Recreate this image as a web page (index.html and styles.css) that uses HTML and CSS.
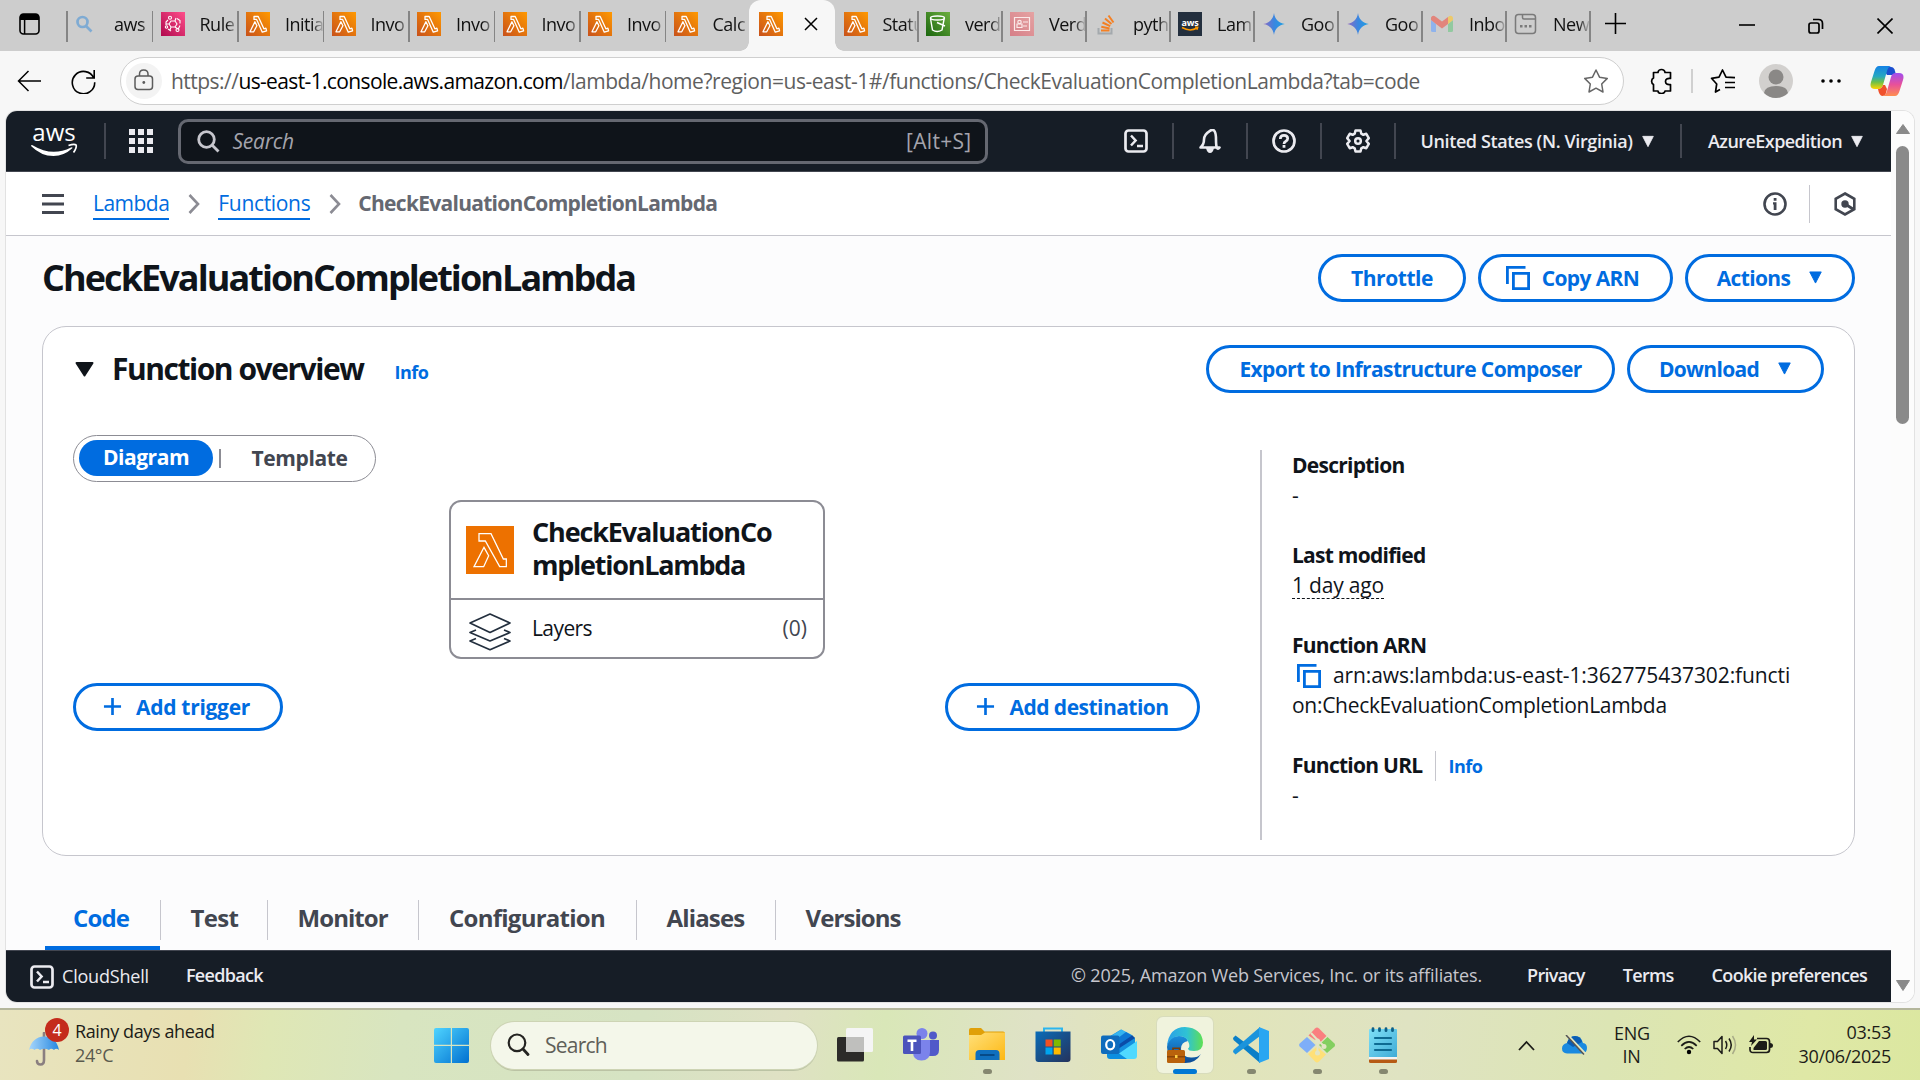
FILE: index.html
```html
<!DOCTYPE html>
<html lang="en">
<head>
<meta charset="utf-8">
<title>CheckEvaluationCompletionLambda</title>
<link rel="stylesheet" href="styles.css">
</head>
<body>
<svg class="defs" width="0" height="0" aria-hidden="true">
  <defs>
    <linearGradient id="g-lambda" x1="0" y1="1" x2="1" y2="0"><stop offset="0" stop-color="#c8511b"/><stop offset="1" stop-color="#ff9900"/></linearGradient>
    <linearGradient id="g-pink" x1="0" y1="1" x2="1" y2="0"><stop offset="0" stop-color="#b0084d"/><stop offset="1" stop-color="#ff4f8b"/></linearGradient>
    <linearGradient id="g-green" x1="0" y1="1" x2="1" y2="0"><stop offset="0" stop-color="#1b660f"/><stop offset="1" stop-color="#6cae3e"/></linearGradient>
    <linearGradient id="g-rose" x1="0" y1="1" x2="1" y2="0"><stop offset="0" stop-color="#d67f88"/><stop offset="1" stop-color="#e5a3a3"/></linearGradient>
    <linearGradient id="g-spark" x1="0" y1="0" x2="1" y2="0"><stop offset="0" stop-color="#9168c0"/><stop offset=".5" stop-color="#3b86e0"/><stop offset="1" stop-color="#1ba1e3"/></linearGradient>
    <linearGradient id="g-win" x1="0" y1="0" x2="1" y2="1"><stop offset="0" stop-color="#4fd4ff"/><stop offset="1" stop-color="#0070d0"/></linearGradient>
    <linearGradient id="g-folder" x1="0" y1="0" x2="1" y2="1"><stop offset="0" stop-color="#ffe07a"/><stop offset="1" stop-color="#fdb813"/></linearGradient>
    <linearGradient id="g-store" x1="0" y1="0" x2="1" y2="1"><stop offset="0" stop-color="#0a6cb8"/><stop offset="1" stop-color="#25335c"/></linearGradient>
    <linearGradient id="g-edge" x1="0" y1="0" x2="1" y2="0"><stop offset="0" stop-color="#2a9fe8"/><stop offset=".55" stop-color="#2fc2d4"/><stop offset="1" stop-color="#5fe052"/></linearGradient>
    <linearGradient id="g-edge2" x1="0" y1="0" x2="0" y2="1"><stop offset="0" stop-color="#1b8fdd"/><stop offset="1" stop-color="#0c4a94"/></linearGradient>
    <linearGradient id="g-pad" x1="0" y1="0" x2="1" y2="1"><stop offset="0" stop-color="#7fe0f7"/><stop offset="1" stop-color="#3fabd6"/></linearGradient>
    <linearGradient id="g-cop1" x1="0" y1="0" x2="0" y2="1"><stop offset="0" stop-color="#1482e6"/><stop offset=".45" stop-color="#26a8c0"/><stop offset=".7" stop-color="#6cc04a"/><stop offset="1" stop-color="#ffd500"/></linearGradient>
    <linearGradient id="g-cop2" x1="0" y1="0" x2="0" y2="1"><stop offset="0" stop-color="#a04df0"/><stop offset=".5" stop-color="#e8509a"/><stop offset="1" stop-color="#ff8f50"/></linearGradient>
    <linearGradient id="g-brella" x1="0" y1="0" x2="1" y2="0"><stop offset="0" stop-color="#a6d6fb"/><stop offset="1" stop-color="#2687e0"/></linearGradient>
  </defs>
  <symbol id="fav-lambda" viewBox="0 0 24 24"><path fill="url(#g-lambda)" d="M0 0h24v24H0z"/><path fill="none" stroke="#fff" stroke-width="1.300" stroke-linejoin="round" d="M8 4.500h4.200l5.700 12.300 2-.6.700 2.700-4.300 1.300L10.600 7.400H8zM8.900 9.800l2 4-3.200 6H4z"/></symbol>
  <symbol id="spark" viewBox="0 0 24 24"><path fill="url(#g-spark)" d="M12 1c.7 6 5 10.300 10.800 11C17 12.700 12.700 17 12 23 11.300 17 7 12.700 1.200 12 7 11.300 11.300 7 12 1z"/></symbol>
  <symbol id="cloudshell" viewBox="0 0 24 24"><rect x="1.500" y="1.500" width="21" height="21" rx="3" fill="none" stroke="currentColor" stroke-width="2.700"/><path fill="none" stroke="currentColor" stroke-width="2.500" d="M7 6.500l4.600 5L7 16.500M13 17h6"/></symbol>
  <symbol id="caret" viewBox="0 0 14 14"><path fill="currentColor" stroke="currentColor" stroke-linejoin="round" d="M.8 1h12.400L7 13z"/></symbol>
  <symbol id="copy" viewBox="0 0 24 24"><path fill="none" stroke="currentColor" stroke-width="2.800" d="M1.400 18V1.400H19.500M7.400 7.400h15.200v15.200H7.400z"/></symbol>
  <symbol id="plus" viewBox="0 0 20 20"><path stroke="currentColor" stroke-width="2.800" d="M10 1v18M1 10h18"/></symbol>
  <symbol id="chev" viewBox="0 0 12 20"><path fill="none" stroke="#8c8c94" stroke-width="2.600" d="M1.500 1l8.500 9-8.500 9"/></symbol>
</svg>

<header class="tabstrip">
  <div class="tab-actions"><svg width="21" height="22" viewBox="0 0 21 22"><rect x="1" y="1" width="19" height="20" rx="3.500" fill="none" stroke="#000" stroke-width="1.600"/><path d="M1 4q0-3 3-3h13q3 0 3 3v3H1z"/><path stroke="#000" stroke-width="1.500" d="M5.600 6v15"/></svg></div>
  <div class="tab w-a"><svg width="24" height="24" viewBox="0 0 24 24"><g fill="none" stroke="#7fabd3" stroke-width="2.700"><circle cx="7.500" cy="10" r="5"/><path d="M11 14l5.500 5.500"/></g></svg><span>aws</span></div>
  <div class="tab w-a"><svg width="24" height="24" viewBox="0 0 24 24"><path fill="url(#g-pink)" d="M0 0h24v24H0z"/><g fill="none" stroke="#fff" stroke-width="1.100"><path d="M10 9h4l2 3-2 3h-4l-2-3zM8 12H5.500M10 15l-1 3M14 9l1-3M14 15l3 2M7 8l-2 2v3M16 6.500l3 2v3M7 17l3 2M19 13.500l-2 4"/><circle cx="9" cy="5.800" r="1.500"/><circle cx="16.500" cy="18" r="1.500"/><circle cx="5.500" cy="15" r="1.200"/></g></svg><span>Rule</span></div>
  <div class="tab w-a"><svg width="24" height="24"><use href="#fav-lambda"/></svg><span>Initia</span></div>
  <div class="tab w-a"><svg width="24" height="24"><use href="#fav-lambda"/></svg><span>Invo</span></div>
  <div class="tab w-a"><svg width="24" height="24"><use href="#fav-lambda"/></svg><span>Invo</span></div>
  <div class="tab w-a"><svg width="24" height="24"><use href="#fav-lambda"/></svg><span>Invo</span></div>
  <div class="tab w-a"><svg width="24" height="24"><use href="#fav-lambda"/></svg><span>Invo</span></div>
  <div class="tab w-b"><svg width="24" height="24"><use href="#fav-lambda"/></svg><span>Calc</span></div>
  <div class="tab active"><svg width="24" height="24"><use href="#fav-lambda"/></svg><svg class="close" width="14" height="14" viewBox="0 0 14 14"><path stroke="#000" stroke-width="1.500" d="M1 1l12 12M13 1L1 13"/></svg></div>
  <div class="tab w-d plain"><svg width="24" height="24"><use href="#fav-lambda"/></svg><span>Statu</span></div>
  <div class="tab w-c"><svg width="24" height="24" viewBox="0 0 24 24"><path fill="url(#g-green)" d="M0 0h24v24H0z"/><g fill="none" stroke="#fff" stroke-width="1.400"><ellipse cx="11.500" cy="6" rx="7" ry="2"/><path d="M4.500 6.500L6.500 18q4.500 3 9.500 0l2.200-11.500M11 10.500l8 3.500"/></g></svg><span>verd</span></div>
  <div class="tab w-c"><svg width="24" height="24" viewBox="0 0 24 24"><path fill="url(#g-rose)" d="M0 0h24v24H0z"/><g fill="none" stroke="#fbe9e9" stroke-width="1.200"><path d="M4.500 5.500h15v13h-15zM13 10h5M13 14h4M7 12h5v3.500H7z"/><circle cx="9.500" cy="10" r="1.700"/></g></svg><span>Verd</span></div>
  <div class="tab w-c"><svg width="24" height="24" viewBox="0 0 24 24"><path fill="none" stroke="#a4a9ad" stroke-width="2" d="M4.500 16v5.500h13V16"/><g stroke="#f48024" stroke-width="2"><path d="M7 18.500h8.500M7.300 14.700l8.300 1.700M8.500 10.500l7.700 3.600M11 6.500l6.500 5.500M14.500 3.500l5 7"/></g></svg><span>pyth</span></div>
  <div class="tab w-c"><svg width="24" height="24" viewBox="0 0 24 24"><path fill="#232f3e" d="M0 0h24v24H0z"/><text x="12" y="13.500" text-anchor="middle" class="aws-mini">aws</text><path fill="none" stroke="#f90" stroke-width="1.500" d="M4 15.500q8 4.500 15 .5M17 15l2.700.300-.8 2.400"/></svg><span>Lam</span></div>
  <div class="tab w-c"><svg width="24" height="24"><use href="#spark"/></svg><span>Goo</span></div>
  <div class="tab w-c"><svg width="24" height="24"><use href="#spark"/></svg><span>Goo</span></div>
  <div class="tab w-c"><svg width="24" height="24" viewBox="0 0 24 24"><path fill="#8fb3ec" d="M1 8l5 4v8H2.500Q1 20 1 18.500z"/><path fill="#92c9a0" d="M23 8l-5 4v8h3.500q1.500 0 1.500-1.500z"/><path fill="#e2857c" d="M1 5.500Q2.500 2.500 6 5l6 4.500L18 5v7l-6 4.500L6 12 1 8z"/><path fill="#ecc96a" d="M18 5q3.500-2.500 5 .5V8l-5 4z"/></svg><span>Inbo</span></div>
  <div class="tab w-c"><svg width="24" height="24" viewBox="0 0 24 24"><g fill="none" stroke="#7a7a7a" stroke-width="1.500"><rect x="1.500" y="2.500" width="20" height="19" rx="3"/><path d="M8.500 2.500v3q0 1.500 1.500 1.500h11.500"/></g><path fill="#7a7a7a" d="M6 13h2.500v2.500H6zM10.500 13H13v2.500h-2.500zM15 13h2.500v2.500H15z"/></svg><span>New</span></div>
  <div class="strip-end">
    <svg width="21" height="21" viewBox="0 0 21 21"><path stroke="#000" stroke-width="1.600" d="M10.500 0v21M0 10.500h21"/></svg>
    <div class="win-controls">
      <svg width="16" height="16" viewBox="0 0 16 16"><path stroke="#000" stroke-width="1.600" d="M0 7h16"/></svg>
      <svg width="16" height="16" viewBox="0 0 16 16"><g fill="none" stroke="#000" stroke-width="1.700"><rect x="1" y="5" width="10" height="10" rx="2"/><path d="M5 1.500h5.500q4 0 4 4V11"/></g></svg>
      <svg width="16" height="16" viewBox="0 0 16 16"><path stroke="#000" stroke-width="1.600" d="M.5.5l15 15M15.500.5l-15 15"/></svg>
    </div>
  </div>
</header>

<div class="toolbar">
  <svg class="back" width="24" height="22" viewBox="0 0 24 22"><path fill="none" stroke="#000" stroke-width="1.500" d="M24 11H1.500M11.500 1l-10 10 10 10"/></svg>
  <svg class="reload" width="25" height="25" viewBox="0 0 25 25"><path fill="none" stroke="#000" stroke-width="1.600" d="M22.800 9.200a11.200 11.200 0 1 0 .9 4M23.200 1v8h-8"/></svg>
  <div class="omnibox">
    <div class="lock"><svg width="20" height="22" viewBox="0 0 20 22"><g fill="none" stroke="#5c5c5c" stroke-width="1.500"><rect x="1" y="7" width="17.500" height="13.500" rx="3"/><path d="M5.500 7V5q0-4 4.200-4T14 5v2"/></g><circle cx="9.800" cy="13.500" r="1.400" fill="#5c5c5c"/></svg></div>
    <div class="url"><span class="u1">https://</span><span class="u2">us-east-1.console.aws.amazon.com</span><span class="u3">/lambda/home?region=us-east-1#/functions/CheckEvaluationCompletionLambda?tab=code</span></div>
    <svg width="26" height="26" viewBox="0 0 26 26"><path fill="none" stroke="#666" stroke-width="1.500" stroke-linejoin="round" d="M13 2l3.500 7.200 7.800 1.200-5.600 5.600 1.300 8-7-3.800L6 24l1.300-8-5.600-5.600 7.800-1.200z"/></svg>
  </div>
  <div class="tools">
    <svg class="puzzle" width="24" height="26" viewBox="0 0 24 26"><path fill="none" stroke="#000" stroke-width="1.700" stroke-linejoin="round" d="M8 4.500a3.500 3 0 0 1 7 0h5.500v6q-5-.5-5 3t5 3v6.500H15a3.500 2.500 0 0 1-7 0H3.500v-6.500a3 3.500 0 0 1 0-6.500V4.500z"/></svg>
    <i></i>
    <svg class="favs" width="26" height="26" viewBox="0 0 26 26"><path fill="none" stroke="#000" stroke-width="1.700" stroke-linejoin="round" d="M10 21.500L5.500 24l1.200-8L1.500 10.300 9 9.200 12.500 2 16 9.200l9 .4M15 14.500h10M15 19.500h10"/></svg>
    <svg class="avatar" width="34" height="34" viewBox="0 0 34 34"><circle cx="17" cy="17" r="17" fill="#d2d0ce"/><circle cx="17" cy="13" r="7.500" fill="#8a8886"/><path fill="#8a8886" d="M5 29q1-7 12-7t12 7q-5 5-12 5T5 29z"/></svg>
    <svg class="dots" width="22" height="6" viewBox="0 0 22 6"><circle cx="3" cy="3" r="1.800"/><circle cx="11" cy="3" r="1.800"/><circle cx="19" cy="3" r="1.800"/></svg>
    <svg width="34" height="31" viewBox="0 0 34 31"><path fill="#1b4fd0" d="M12 1h9q3 0 4 4l1 4h-9z"/><path fill="url(#g-cop1)" d="M9 0h12q-3 1-4 5l-4 14q-1 4-5 4H5q-6 0-4-7L4.500 5Q6 0 9 0z"/><path fill="url(#g-cop2)" d="M25 30H13q3-1 4-5l4-14q1-4 5-4h3q6 0 4 7l-3.500 11q-1.500 5-4.500 5z"/><path fill="#f0512c" d="M8 23q4 0 5-4l2 0 2 4-1 4q-1 3-4 3-3-1-4-7z"/></svg>
  </div>
</div>

<div class="viewport">
  <div class="page">
    <nav class="aws-nav">
      <svg class="aws-logo" width="47" height="31" viewBox="0 0 47 31"><text x="23" y="15" text-anchor="middle" class="aws-word">aws</text><path fill="#fff" d="M0 19.500q1-.8 2 0Q21 31 40 21.500q2-.5 1.300.8Q33 30 22.500 30 10 30 0 20z"/><path fill="none" stroke="#fff" stroke-width="1.700" d="M37.500 19.500q6-2 7.700-.4.600 2.800-2.700 7.400"/></svg>
      <i class="v"></i>
      <svg class="apps" width="24" height="24" viewBox="0 0 24 24" fill="#ebebf0"><path d="M0 0h6v6H0zM9 0h6v6H9zM18 0h6v6h-6zM0 9h6v6H0zM9 9h6v6H9zM18 9h6v6h-6zM0 18h6v6H0zM9 18h6v6H9zM18 18h6v6h-6z"/></svg>
      <div class="aws-search"><svg width="23" height="23" viewBox="0 0 23 23"><g fill="none" stroke="#c6c6cd" stroke-width="2.800"><circle cx="9.500" cy="9.500" r="7.800"/><path d="M15 15l6.500 6.500"/></g></svg><em>Search</em><span>[Alt+S]</span></div>
      <div class="nav-icons">
        <div><svg width="24" height="24"><use href="#cloudshell"/></svg></div>
        <div><svg width="24" height="24" viewBox="0 0 24 24"><path fill="none" stroke="currentColor" stroke-width="2.600" stroke-linejoin="round" d="M2.500 18.500q3.500-3 3.500-8T12 1.800t6 8.700 3.500 8z"/><path fill="currentColor" d="M8 19h8q-1 5-4 5t-4-5z"/></svg></div>
        <div><svg width="24" height="24" viewBox="0 0 24 24"><g fill="none" stroke="currentColor" stroke-width="2.700"><circle cx="12" cy="12" r="10.500"/><path d="M8.300 10q0-3.600 3.700-3.600t3.700 3.200q0 1.700-1.900 2.700T12 15"/></g><path fill="currentColor" d="M10.600 16h2.800v2.700h-2.800z"/></svg></div>
        <div><svg width="24" height="24" viewBox="0 0 24 24"><g fill="none" stroke="currentColor" stroke-width="2.500" stroke-linejoin="round"><path d="M9.500 1.500h5l.8 3.200 2 1.100 3-1 2.500 4.300-2.400 2.900 2.400 2.900-2.500 4.300-3-1-2 1.100-.8 3.200h-5l-.8-3.200-2-1.100-3 1L1.200 14.900 3.600 12 1.200 9.100l2.500-4.300 3 1 2-1.100z"/><circle cx="12" cy="12" r="2.800"/></g></svg></div>
      </div>
      <div class="region"><span>United States (N. Virginia)</span><svg width="12" height="13"><use href="#caret"/></svg></div>
      <div class="account"><span>AzureExpedition</span><svg width="12" height="13"><use href="#caret"/></svg></div>
    </nav>

    <div class="crumbs">
      <svg class="burger" width="22" height="20" viewBox="0 0 22 20"><path stroke="#424650" stroke-width="2.800" d="M0 1.500h22M0 10h22M0 18.500h22"/></svg>
      <a class="c1">Lambda</a>
      <svg width="12" height="20"><use href="#chev"/></svg>
      <a class="c2">Functions</a>
      <svg width="12" height="20"><use href="#chev"/></svg>
      <b>CheckEvaluationCompletionLambda</b>
      <div class="crumb-tools">
        <svg width="24" height="24" viewBox="0 0 24 24"><circle cx="12" cy="12" r="10.500" fill="none" stroke="#424650" stroke-width="2.600"/><path fill="#424650" d="M10.700 6h2.800v2.800h-2.800zM10 10.200h3.500V18h-2.800v-5.500H10z"/></svg>
        <i></i>
        <svg width="24" height="24" viewBox="0 0 24 24"><path fill="none" stroke="#424650" stroke-width="2.600" d="M12 1.500l9.300 5.300v10.400L12 22.500l-9.300-5.300V6.800z"/><circle cx="12" cy="12" r="3.700" fill="#424650"/><path stroke="#424650" stroke-width="2.800" d="M12 12l8 5"/></svg>
      </div>
    </div>

    <main>
      <div class="title-row">
        <h1>CheckEvaluationCompletionLambda</h1>
        <div class="btns">
          <button class="w148">Throttle</button>
          <button class="w195"><svg width="24" height="24"><use href="#copy"/></svg><span>Copy ARN</span></button>
          <button class="w170"><span>Actions</span><svg width="15" height="13" class="ml"><use href="#caret"/></svg></button>
        </div>
      </div>

      <section class="card">
        <div class="card-head">
          <svg width="19" height="15" viewBox="0 0 19 15"><path fill="#0f141a" stroke="#0f141a" stroke-linejoin="round" stroke-width="2" d="M1.500 1h16L9.500 13.500z"/></svg>
          <h2>Function overview</h2><a class="info">Info</a>
          <div class="btns">
            <button class="w409">Export to Infrastructure Composer</button>
            <button class="w197"><span>Download</span><svg width="15" height="13" class="ml"><use href="#caret"/></svg></button>
          </div>
        </div>
        <div class="card-body">
          <div class="design">
            <div class="segmented"><span class="on">Diagram</span><i></i><span class="off">Template</span></div>
            <div class="node">
              <div class="node-head">
                <svg width="48" height="48" viewBox="0 0 144 144"><path fill="#ed7100" d="M0 0h144v144H0z"/><path fill="none" stroke="#fff" stroke-width="3.800" d="M39 23h36l37 76h9v23h-20L58 45H39zM54 64l14 25-15 33H24z"/></svg>
                <h3><span>CheckEvaluationCo</span><br><span class="l2">mpletionLambda</span></h3>
              </div>
              <div class="node-foot">
                <svg width="42" height="38" viewBox="0 0 42 38"><g fill="none" stroke="#232f3e" stroke-width="1.700" stroke-linejoin="round"><path d="M21 1l20 9-20 9.500L1 10zM7 17l-6 2.500 20 8.500 20-8.500-6-2.500M7 25.500L1 28l20 8.700L41 28l-6-2.500"/></g></svg>
                <span class="ly">Layers</span><span class="ct">(0)</span>
              </div>
            </div>
            <div class="add-row">
              <button class="w210"><svg width="19" height="19"><use href="#plus"/></svg><span>Add trigger</span></button>
              <button class="w255"><svg width="19" height="19"><use href="#plus"/></svg><span>Add destination</span></button>
            </div>
          </div>
          <dl class="details">
            <dt>Description</dt><dd>-</dd>
            <dt>Last modified</dt><dd><span class="ago">1 day ago</span></dd>
            <dt>Function ARN</dt><dd class="arn"><svg width="24" height="24"><use href="#copy"/></svg><span class="a1">arn:aws:lambda:us-east-1:362775437302:functi</span><br><span class="a2">on:CheckEvaluationCompletionLambda</span></dd>
            <dt>Function URL<a class="info">Info</a></dt><dd>-</dd>
          </dl>
        </div>
      </section>

      <div class="tabs"><span class="t-code">Code</span><span>Test</span><span>Monitor</span><span>Configuration</span><span>Aliases</span><span>Versions</span></div>
    </main>

    <footer class="aws-foot">
      <svg width="24" height="24"><use href="#cloudshell"/></svg><span class="f1">CloudShell</span><span class="f2">Feedback</span>
      <div class="legal"><span class="copyr">© 2025, Amazon Web Services, Inc. or its affiliates.</span><span>Privacy</span><span>Terms</span><span>Cookie preferences</span></div>
    </footer>
  </div>
  <div class="scroll">
    <svg width="14" height="10" viewBox="0 0 14 10"><path fill="#8a8a8a" stroke="#8a8a8a" stroke-linejoin="round" d="M7 .5l6.500 9H.5z"/></svg>
    <div class="thumb"></div>
    <svg class="down" width="14" height="11" viewBox="0 0 14 11"><path fill="#8a8a8a" stroke="#8a8a8a" stroke-linejoin="round" d="M7 10.500L.5.500h13z"/></svg>
  </div>
</div>

<div class="taskbar">
  <div class="weather">
    <div class="brella"><svg width="31" height="34" viewBox="0 0 31 34"><path fill="none" stroke="#8a7f80" stroke-width="2.600" stroke-linecap="round" d="M15 1v27q0 4.500-3.500 4.500T8 29"/><path fill="url(#g-brella)" d="M0 18Q3 5 15 4.500T30 18q-3-2.500-5 0-3-2.500-5 0-5-2.500-9 0-3-2.500-5.500 0-3-2.500-5.500 0z"/></svg><b>4</b></div>
    <div class="wtext"><span>Rainy days ahead</span><span class="deg">24°C</span></div>
  </div>
  <svg class="start" width="35" height="35" viewBox="0 0 35 35"><path fill="url(#g-win)" d="M2 0h14.800v16.800H0V2q0-2 2-2zM18 0h15q2 0 2 2v14.800H18zM0 18h16.800v17H2q-2 0-2-2zM18 18h17v15q0 2-2 2H18z"/></svg>
  <div class="tb-search"><svg width="23" height="23" viewBox="0 0 23 23"><g fill="none" stroke="#242421" stroke-width="2.200"><circle cx="10" cy="9.800" r="8.300"/><path stroke-width="2.800" stroke-linecap="round" d="M16 16l5 5.500"/></g></svg><span>Search</span></div>
  <div class="apps-row">
    <div><svg width="36" height="36" viewBox="0 0 36 36"><rect y="10" width="27" height="24.500" rx="1.500" fill="#2c2b29"/><rect x="9" y="1" width="27" height="24" rx="1.500" fill="#f5f5f5"/><path fill="#bfbfbd" d="M9 10h18v15H9z"/></svg></div>
    <div><svg width="36" height="36" viewBox="0 0 36 36"><circle cx="19" cy="6.500" r="5.500" fill="#7b83eb"/><circle cx="30" cy="8.500" r="4" fill="#5059c9"/><path fill="#5059c9" d="M24 13h12v10q0 6-6 6h-6z"/><path fill="#7b83eb" d="M10 13h17v12q0 8.500-8.500 8.500T10 25z"/><rect y="8.500" width="18" height="18.500" rx="1.500" fill="#4b53bc"/><path fill="#fff" d="M4.500 12.500h9V15H10.300v9H7.700v-9H4.500z"/></svg></div>
    <div class="run"><svg width="36" height="36" viewBox="0 0 36 36"><path fill="#e0a008" d="M0 3q0-2 2-2h10l3.500 3.500H34q2 0 2 2V15H0z"/><path fill="url(#g-folder)" d="M0 8h12l4-2.500h20V33H0z"/><path fill="#0f6fbe" d="M6.500 33v-6q0-4 4-4H27q3.500 0 3.500 4v6z"/><path fill="#064a88" d="M11 27h14.500v2H11z"/></svg></div>
    <div><svg width="36" height="36" viewBox="0 0 36 36"><path fill="none" stroke="#2cb5ee" stroke-width="2" d="M9 9V1.500h18V9"/><path fill="url(#g-store)" d="M.5 4.500h35V32q0 3-3 3h-29q-3 0-3-3z"/><path fill="#f25022" d="M10.500 12.500h7v7h-7z"/><path fill="#7fba00" d="M18.700 12.500h7v7h-7z"/><path fill="#00a4ef" d="M10.500 20.500h7v7h-7z"/><path fill="#ffb900" d="M18.700 20.500h7v7h-7z"/></svg></div>
    <div><svg width="36" height="36" viewBox="0 0 36 36"><path fill="#1490df" d="M6 11L20 2.500 34 11v16H6z"/><path fill="#34b4f0" d="M10 9l10.500-6.500L31 8l-15 10z"/><path fill="#0a4ca8" d="M31 8l3 3-17 11v-6z"/><path fill="#0f78d4" d="M25 5l6 3.500L17 18v-7z"/><path fill="#50d9ff" d="M36 14v15q0 3-3 3H10z"/><path fill="#0c8ee0" d="M6 18l20 14H9q-3 0-3-3z"/><rect y="8.500" width="18.500" height="18.500" rx="2" fill="#0f6cbd"/><ellipse cx="9.200" cy="17.700" rx="4" ry="4.700" fill="none" stroke="#fff" stroke-width="2.200"/></svg></div>
    <div class="run current"><svg width="36" height="36" viewBox="0 0 36 36"><path fill="url(#g-edge2)" d="M0 20Q1 9 12 9q7 0 9 5-7 1-7 8 1 9 11 8.500 6 0 9-3.500Q29 36 18 36 1 35 0 20z"/><path fill="url(#g-edge)" d="M0 19Q2 0 18 0q17 1 18 15.500 0 8.500-9 8.500-6 0-6-2.500 2-1 1-5Q20 9 12 9 3 10 0 19z"/><rect y="23" width="18" height="13" rx="1.500" fill="#b9620c"/><path fill="none" stroke="#7a3c05" stroke-width="1.600" d="M6 23v-1.800h6.500V23"/><path fill="#8a4507" d="M0 29h18v1.500H0z"/><path fill="#ffcf45" d="M8 28h2.500v3H8z"/></svg></div>
    <div class="run"><svg width="36" height="36" viewBox="0 0 36 36"><path fill="#0a7fc8" d="M0 11l2.500-2.500L27 27v9L.5 13z"/><path fill="#1b94dc" d="M0 25l2.500 2.500L27 9V0L.5 23z"/><path fill="#2aa6f2" d="M26 0l10 4v28l-10 4z"/></svg></div>
    <div class="run"><svg width="36" height="36" viewBox="0 0 36 36"><path fill="#fa7f7f" d="M9.500 8.500L16 1.500q2-2 4 0l7.500 7.500-7 7z"/><path fill="#84cf60" d="M28.500 10l7 6.500q1 1.500 0 3L28 26l-8-8z"/><path fill="#ffe078" d="M18 19.500l9 8-7 7q-2 1.800-4 0l-7-7.500z"/><path fill="#7eaef8" d="M8 10l8.500 8L8 26 .7 19.500q-1.200-1.500 0-3z"/><path fill="none" stroke="#e3e5c4" stroke-width="2" d="M12 6l6.500 7v13M18.500 13l6.500 6"/><g fill="#e3e5c4"><circle cx="18.500" cy="14" r="2.500"/><circle cx="18.500" cy="26" r="2.500"/><circle cx="25" cy="19.500" r="2.500"/></g></svg></div>
    <div class="run"><svg width="36" height="36" viewBox="0 0 36 36"><path fill="#b65a14" d="M4 30h28v4.500q0 1.500-1.500 1.500h-25Q4 36 4 34.500z"/><path fill="#f3f3f3" d="M4 29h28v3.500H4z"/><path fill="url(#g-pad)" d="M5 2h26q1 0 1 1v27H4V3q0-1 1-1z"/><path stroke="#0d6a92" stroke-width="2.200" stroke-linecap="round" d="M10 11h16M10 17h16M10 23h16"/><path stroke="#0d5f86" stroke-width="2.800" stroke-linecap="round" d="M8 1.700v2M14.500 1.700v2M21 1.700v2M27.500 1.700v2"/></svg></div>
  </div>
  <div class="tray">
    <svg class="up" width="17" height="11" viewBox="0 0 17 11"><path fill="none" stroke="#1c1c18" stroke-width="1.800" d="M1 10l7.500-8L16 10"/></svg>
    <svg class="od" width="25" height="20" viewBox="0 0 25 20"><path fill="#1a8ae0" d="M5 18.500q-5-.5-5-5T5 8q2-7 8-7t8 7q4 .5 4 5t-4.500 5.500z"/><path fill="#0a5db4" d="M5 8q2-7 8-7t7 6l-9 5z"/><path stroke="#e5e7c0" stroke-width="2.400" d="M5.500 0l18 19"/><path stroke="#555" stroke-width="1.500" d="M4 0l18 19.500"/></svg>
    <div class="lang"><span>ENG</span><span>IN</span></div>
    <div class="status">
      <svg width="24" height="20" viewBox="0 0 24 20"><g fill="none" stroke="#1c1c18" stroke-width="1.700"><path d="M.8 7Q12-4.500 23.200 7M4.300 10.800Q12 3 19.700 10.800M7.700 14Q12 10 16.300 14"/></g><circle cx="12" cy="17" r="2.200"/></svg>
      <svg width="24" height="20" viewBox="0 0 24 20"><g fill="none" stroke="#1c1c18" stroke-width="1.500" stroke-linejoin="round"><path d="M1 6.500h3.500L9 1.500v17l-4.500-5H1zM12.500 6q2.500 4 0 8M16 3.500q4.500 6.500 0 13"/><path stroke="#a9ac88" d="M19.500 1q6 9 0 18"/></g></svg>
      <svg width="24" height="20" viewBox="0 0 24 20"><path fill="none" stroke="#1c1c18" stroke-width="1.700" d="M8 3.500h9.500q3 0 3 3v8q0 3-3 3H4q-3 0-3-3V12"/><path fill="#1c1c18" d="M10 6h6.500q1.500 0 1.500 1.500v6q0 1.500-1.500 1.500H4.500V13zM21 8q3 0 3 2.500T21 13zM5 0L0 7h3l-1 4 6-6.500H5z"/></svg>
    </div>
    <div class="clock"><span class="tm">03:53</span><span class="dt">30/06/2025</span></div>
  </div>
</div>
</body>
</html>
```
FILE: styles.css
```css
* { box-sizing: border-box; }
body {
  margin: 0;
  width: 1920px;
  height: 1080px;
  overflow: hidden;
  display: flex;
  flex-direction: column;
  background: #f7f7f7;
  color: #0f141a;
  font-family: "Open Sans", "Noto Sans", sans-serif;
  font-size: 21px;
}
svg { display: block; flex: none; }
.defs { position: absolute; }

/* browser tab strip */
.tabstrip { height: 51px; flex: none; background: #cdcdcd; display: flex; align-items: stretch; }
.tab-actions { width: 66px; padding: 13px 0 0 19px; flex: none; }
.tab { display: flex; align-items: center; padding: 0 0 3px 9px; position: relative; flex: none; font-size: 18px; letter-spacing: -0.5px; color: #111; }
.tab span {
  margin-left: 15px;
  flex: 1;
  overflow: hidden;
  white-space: nowrap;
  -webkit-mask-image: linear-gradient(90deg, #000 70%, transparent 105%);
  mask-image: linear-gradient(90deg, #000 70%, transparent 105%);
}
.tab::before { content: ""; position: absolute; left: 0; top: 11px; width: 1.5px; height: 31px; background: #858585; }
.tab.active::before, .tab.plain::before { display: none; }
.w-a { width: 85.5px; }
.w-b { width: 84.5px; }
.w-c { width: 84px; }
.w-d { width: 82.5px; }
.tab.active { width: 85.5px; background: #f7f7f7; border-radius: 12px 12px 0 0; padding-left: 10px; }
.tab.active::after {
  content: "";
  position: absolute;
  left: -9px;
  right: -9px;
  bottom: 0;
  height: 9px;
  background:
    radial-gradient(circle at 0 0, transparent 8.5px, #f7f7f7 9px) left / 9px 9px no-repeat,
    radial-gradient(circle at 100% 0, transparent 8.5px, #f7f7f7 9px) right / 9px 9px no-repeat;
}
.close { margin-left: 21px; }
.aws-mini { font: 700 9px "Open Sans", sans-serif; fill: #fff; letter-spacing: -0.2px; }
.strip-end { flex: 1; display: flex; align-items: flex-start; padding: 13px 27px 0 16px; position: relative; }
.strip-end::before { content: ""; position: absolute; left: 0; top: 11px; width: 1.5px; height: 31px; background: #858585; }
.win-controls { display: flex; gap: 53px; margin: 5px 0 0 auto; }

/* browser toolbar */
.toolbar { height: 60px; flex: none; display: flex; align-items: center; background: #f7f7f7; padding-left: 17px; }
.back { margin-top: -1px; }
.reload { margin-left: 30px; }
.omnibox { margin-left: 24px; margin-top: -1px; width: 1504px; height: 48px; border: 1.5px solid #cfcfcf; border-radius: 24px; background: #fff; display: flex; align-items: center; padding: 0 14px 0 5px; }
.lock { width: 36px; height: 36px; border-radius: 50%; background: #f3f3f3; display: flex; align-items: center; justify-content: center; }
.lock svg { margin-top: -1px; }
.url { margin-left: 9px; white-space: nowrap; flex: 1; color: #5f5f5f; }
.u1 { letter-spacing: -0.53px; }
.u2 { letter-spacing: -0.64px; color: #000; }
.u3 { letter-spacing: -0.45px; }
.tools { display: flex; align-items: center; }
.tools i { width: 2px; height: 24px; background: #d0d0d0; margin: 0 17px 0 17px; }
.puzzle { margin-left: 26px; }
.avatar { margin-left: 23px; }
.dots { margin: 0 28px 0 27px; }

/* page viewport */
.viewport { height: 891px; flex: none; margin: 0 6px; display: flex; border-radius: 11px; overflow: hidden; background: #fcfcfd; box-shadow: 0 0 0 1px #e2e2e2; }
.page { width: 1885px; display: flex; flex-direction: column; }
.scroll { width: 23px; display: flex; flex-direction: column; align-items: center; padding: 13px 0 11px; background: #fcfcfc; }
.thumb { width: 13px; height: 278px; margin-top: 12px; border-radius: 7px; background: #8a8a8a; }
.down { margin-top: auto; }

.aws-nav { height: 61px; flex: none; background: #161d26; border-bottom: 1px solid #424650; display: flex; align-items: center; color: #ebebf0; padding-left: 25px; font-size: 18px; white-space: nowrap; }
.aws-word { font: 500 24px "Open Sans", sans-serif; fill: #fff; letter-spacing: 0; }
.aws-nav .v { width: 1.5px; height: 36px; background: #424650; margin-left: 26px; }
.apps { margin-left: 23px; }
.aws-search { margin-left: 25px; width: 810px; height: 45px; border: 3px solid #656871; border-radius: 10px; background: #0f141a; display: flex; align-items: center; padding: 0 13px 0 16px; font-size: 21px; color: #a4a4ad; }
.aws-search em { margin: -1px 0 0 13px; letter-spacing: -0.25px; }
.aws-search span { margin: -1px 0 0 auto; letter-spacing: 0.3px; }
.nav-icons { display: flex; margin-left: 112px; }
.nav-icons div { width: 74px; height: 36px; display: flex; align-items: center; justify-content: center; border-right: 2px solid #424650; }
.region { display: flex; align-items: center; height: 34px; width: 286.5px; padding-left: 25px; border-right: 2px solid #424650; font-weight: 600; letter-spacing: -0.39px; }
.region span, .account span { margin-top: -1px; }
.region svg { margin-left: 9px; }
.account { display: flex; align-items: center; padding-left: 26px; font-weight: 600; letter-spacing: -0.56px; }
.account svg { margin-left: 9px; }

.crumbs { height: 64px; flex: none; background: #fff; border-bottom: 1.5px solid #c6c6cd; display: flex; align-items: center; padding-left: 36px; white-space: nowrap; }
.crumbs a { color: #006ce0; border-bottom: 2px solid #006ce0; line-height: 29px; }
.c1 { letter-spacing: -0.52px; margin: 1px 19px 0 29px; }
.c2 { letter-spacing: -0.33px; margin: 1px 19px 0 18px; }
.crumbs b { font-weight: 700; color: #656871; letter-spacing: -0.71px; margin: -1px 0 0 17px; }
.crumb-tools { margin-left: auto; display: flex; align-items: center; padding-right: 34px; }
.crumb-tools i { width: 1.5px; height: 38px; background: #c6c6cd; margin: 0 23px 0 22px; }

/* main content */
main { flex: 1; background: #fcfcfd; padding: 18px 36px 0; display: flex; flex-direction: column; }
.title-row { display: flex; height: 48px; align-items: center; justify-content: space-between; }
h1, h2, h3 { margin: 0; font-weight: 700; }
h1 { font-size: 36px; letter-spacing: -1.93px; line-height: 48px; }
.btns { display: flex; gap: 12px; margin-left: auto; }
button {
  height: 48px;
  border: 3px solid #006ce0;
  border-radius: 24px;
  background: #fff;
  color: #006ce0;
  font: 700 21px "Open Sans", "Noto Sans", sans-serif;
  letter-spacing: -0.62px;
  padding: 0 0 1px;
  display: flex;
  align-items: center;
  justify-content: center;
  white-space: nowrap;
}
button svg + span { margin-left: 12px; }
.ml { margin-left: 18px; }
.w148 { width: 148px; letter-spacing: -0.44px; }
.w170 { width: 170px; }
.w195 { width: 195px; padding-right: 6px; }
.w197 { width: 197px; letter-spacing: -0.7px; }
.w409 { width: 409px; }
.w210 { width: 210px; padding-right: 3px; letter-spacing: -0.3px; }
.w255 { width: 255px; letter-spacing: -0.53px; }

.card { margin-top: 24px; height: 530px; width: 1813px; flex: none; border: 1.5px solid #c6c6cd; border-radius: 24px; background: #fff; padding: 18px 30px 0; }
.card-head { display: flex; align-items: center; height: 48px; padding-left: 2px; }
h2 { font-size: 30px; letter-spacing: -1.46px; margin: -2px 0 0 18px; }
.info { color: #006ce0; font-size: 18px; font-weight: 700; letter-spacing: -0.45px; }
.card-head .info { margin: 5px 0 0 31px; }
.card-body { display: flex; margin-top: 42px; }
.design { width: 1187px; flex: none; }
.segmented { width: 303px; height: 47px; border: 1.5px solid #8c8c94; border-radius: 24px; display: flex; align-items: center; padding: 0 5px 1px; font-weight: 700; letter-spacing: -0.45px; }
.on { width: 134px; height: 36px; border-radius: 18px; background: #006ce0; color: #fff; text-align: center; line-height: 35px; }
.segmented i { width: 1.5px; height: 19px; background: #8c8c94; margin-left: 6px; }
.off { color: #424650; margin-left: 31px; line-height: 35px; letter-spacing: -0.39px; }
.node { width: 376px; height: 159px; margin: 18px 0 0 376px; border: 2px solid #8c8c94; border-radius: 12px; }
.node-head { height: 98px; border-bottom: 2px solid #8c8c94; display: flex; align-items: center; padding-left: 15px; }
h3 { font-size: 27px; line-height: 33px; letter-spacing: -1.14px; margin: -4px 0 0 18px; }
.l2 { letter-spacing: -1.26px; }
.node-foot { display: flex; align-items: center; height: 58px; padding: 0 16px 0 18px; }
.node-foot svg { margin-top: 5px; }
.ly { margin: -2px 0 0 21px; letter-spacing: -0.59px; }
.ct { margin: -2px 0 0 auto; color: #424650; }
.add-row { margin-top: 24px; width: 1127px; display: flex; justify-content: space-between; }
.add-row button svg + span { margin-left: 14px; }
.details { margin: 15px 0 0; height: 390px; border-left: 2px solid #c6c6cd; padding-left: 30px; line-height: 30px; letter-spacing: -0.1px; white-space: nowrap; }
dt { font-weight: 700; letter-spacing: -0.74px; height: 30px; }
dd { margin: 0 0 30px; min-height: 30px; }
.ago { display: inline-block; height: 29px; border-bottom: 1.5px dashed #0f141a; letter-spacing: -0.2px; line-height: 30px; }
.arn svg { display: inline-block; vertical-align: -5px; margin: -3px 12px 0 5px; color: #006ce0; }
.a2 { letter-spacing: -0.3px; }
.details .info { display: inline-block; border-left: 1.5px solid #c6c6cd; padding-left: 12px; margin-left: 13px; }

.tabs { display: flex; margin: 44px 0 0 3px; height: 50px; font-size: 24px; font-weight: 700; color: #424650; letter-spacing: -0.93px; white-space: nowrap; }
.tabs span { flex: none; height: 40px; line-height: 35px; padding-left: 30px; border-left: 1.5px solid #c6c6cd; }
.tabs .t-code { width: 114.5px; height: 50px; border-left: 0; padding-left: 28px; color: #006ce0; border-bottom: 4px solid #006ce0; letter-spacing: -0.86px; }
.tabs span:nth-child(2) { width: 107px; letter-spacing: -0.7px; }
.tabs span:nth-child(3) { width: 151.5px; }
.tabs span:nth-child(4) { width: 217.5px; letter-spacing: -0.74px; }
.tabs span:nth-child(5) { width: 139px; letter-spacing: -0.85px; }

.aws-foot { height: 52px; flex: none; background: #161d26; border-top: 1.5px solid #424650; color: #ebebf0; display: flex; align-items: center; padding: 0 24px; font-size: 18px; white-space: nowrap; }
.f1 { margin: -1px 0 0 8px; letter-spacing: -0.2px; font-weight: 500; }
.f2 { margin: -3px 0 0 37px; letter-spacing: -0.68px; font-weight: 600; }
.legal { margin: -3px 0 0 auto; display: flex; gap: 38px; font-weight: 600; letter-spacing: -0.68px; }
.copyr { font-weight: 400; color: #c6c6cd; letter-spacing: -0.17px; margin-right: 7px; }

/* Windows taskbar */
.taskbar {
  margin-top: auto;
  height: 72px;
  flex: none;
  border-top: 2px solid #b4b69c;
  background: linear-gradient(97deg, #e8e4bf 0, #e8e0b2 190px, #dfe7b5 270px, #d8e5c0 400px, #d6e3c3 640px, #dfe1c4 780px, #d9e7b8 880px, #dfe2c6 1030px, #e2e5b8 1160px, #dfe3c2 1400px, #dce5b4 1600px, #dfe8a6 1800px, #dbe7a0 1920px);
  display: flex;
  align-items: center;
  color: #1c1c18;
  font-size: 18px;
  white-space: nowrap;
}
.weather { width: 434px; display: flex; padding-left: 29px; }
.brella { width: 46px; height: 46px; padding-top: 10px; position: relative; }
.brella b { position: absolute; left: 16px; top: -4px; width: 24px; height: 24px; border-radius: 50%; background: #c42b1c; color: #fff; text-align: center; font-weight: 400; font-size: 16px; line-height: 24px; }
.wtext { display: flex; flex-direction: column; line-height: 24px; letter-spacing: -0.38px; margin-top: -3px; }
.deg { color: #5a5a4e; }
.tb-search { width: 326px; height: 47px; margin-left: 22px; border-radius: 24px; background: #f4f7ea; box-shadow: 0 0 0 1px #cdd4b4, 0 2px 0 #bbc3a4; display: flex; align-items: center; padding: 0 0 1px 16px; font-size: 21px; color: #5f6058; letter-spacing: -0.75px; }
.tb-search span { margin-left: 15px; }
.apps-row { display: flex; margin-left: 5px; }
.apps-row div { width: 66px; height: 56px; display: flex; align-items: center; justify-content: center; position: relative; }
.apps-row .current { width: 56px; margin: 0 5px; background: #f0f3dd; border-radius: 6px; box-shadow: 0 0 0 1px #d8dcbc; }
.run::after { content: ""; position: absolute; bottom: -1px; left: calc(50% - 4.5px); width: 9px; height: 5px; border-radius: 3px; background: #858770; }
.current::after { width: 24px; left: 16px; background: #0078d4; bottom: -1px; }
.tray { flex: 1; display: flex; align-items: center; padding-right: 29px; }
.up { margin-left: 102px; }
.od { margin-left: 27px; }
.lang { margin-left: 27px; width: 35px; text-align: center; display: flex; flex-direction: column; line-height: 23px; letter-spacing: -0.3px; }
.status { display: flex; gap: 12px; margin-left: 28px; }
.clock { margin-left: auto; display: flex; flex-direction: column; align-items: flex-end; line-height: 24px; margin-top: -3px; letter-spacing: -0.3px; }
```
